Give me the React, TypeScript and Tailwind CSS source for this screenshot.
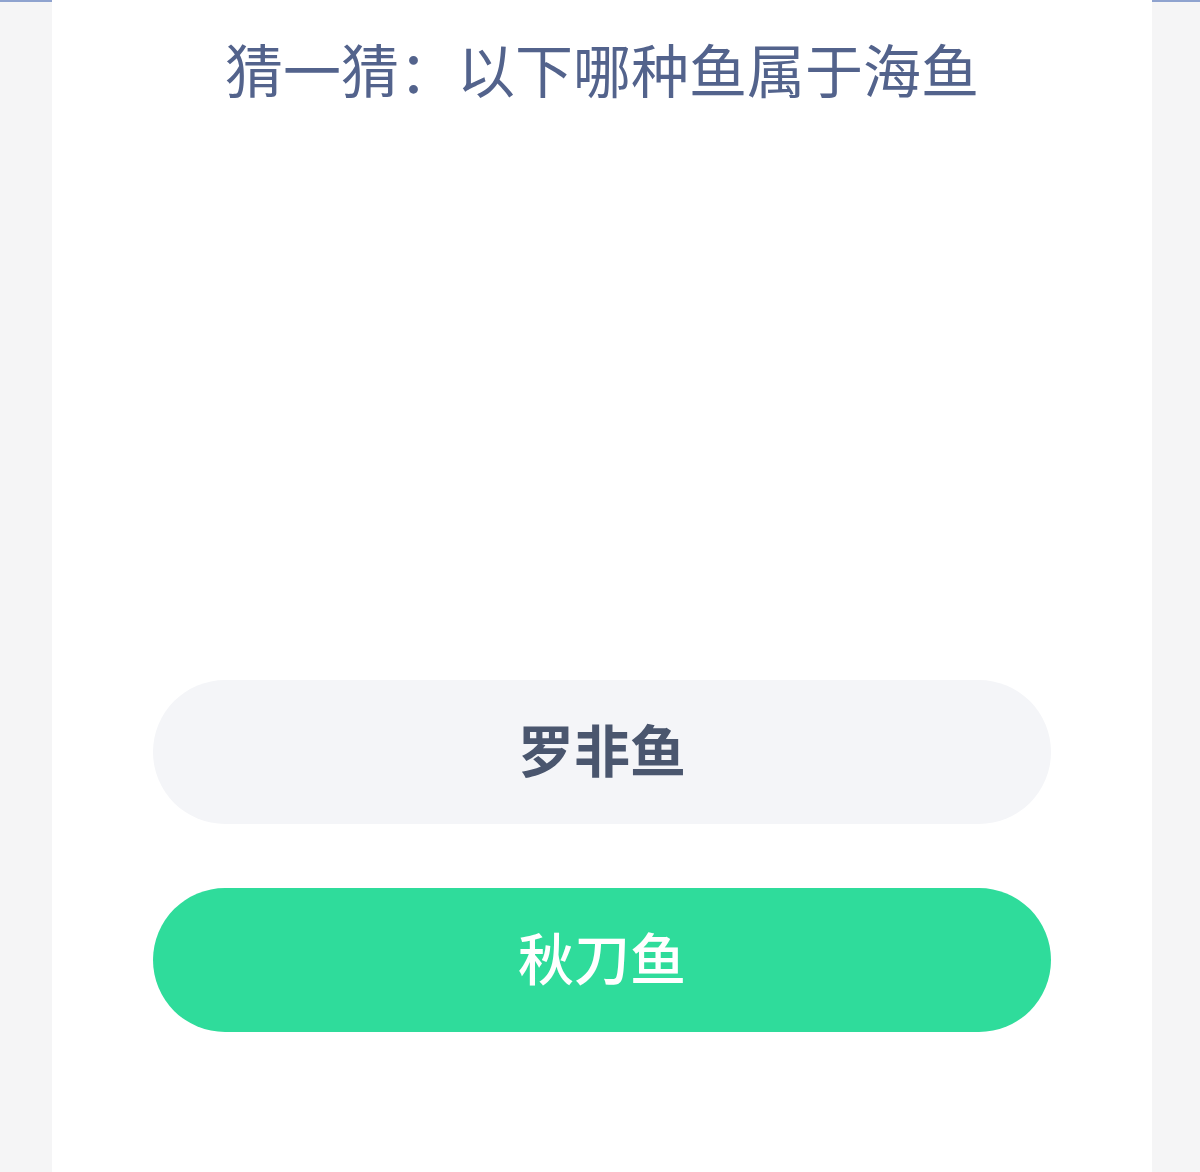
const font = "font-['Noto_Sans_CJK_SC','Noto_Sans',sans-serif]";

const options = [
  { label: "罗非鱼", correct: false },
  { label: "秋刀鱼", correct: true },
];

export default function App() {
  return (
    <div className={`min-h-[1172px] w-[1200px] bg-[#f5f5f6] flex ${font}`}>
      <div className="w-[52px] shrink-0 border-t-2 border-[#8fa3cf]" />
      <main className="flex-1 bg-white flex flex-col items-center">
        <h1 className="mt-[34px] text-[58px] leading-[68px] text-[#53638c] font-normal">
          猜一猜：以下哪种鱼属于海鱼
        </h1>
        <div className="mt-[578px] flex flex-col gap-[64px] w-[898px]">
          {options.map(o => (
            <button
              key={o.label}
              className={
                o.correct
                  ? "h-[144px] pb-[8px] rounded-full bg-[#2fdc9b] text-white text-[56px] font-medium"
                  : "h-[144px] pb-[8px] rounded-full bg-[#f4f5f8] text-[#4a566e] text-[56px] font-semibold"
              }
            >
              {o.label}
            </button>
          ))}
        </div>
      </main>
      <div className="w-[48px] shrink-0 border-t-2 border-[#8fa3cf]" />
    </div>
  );
}
